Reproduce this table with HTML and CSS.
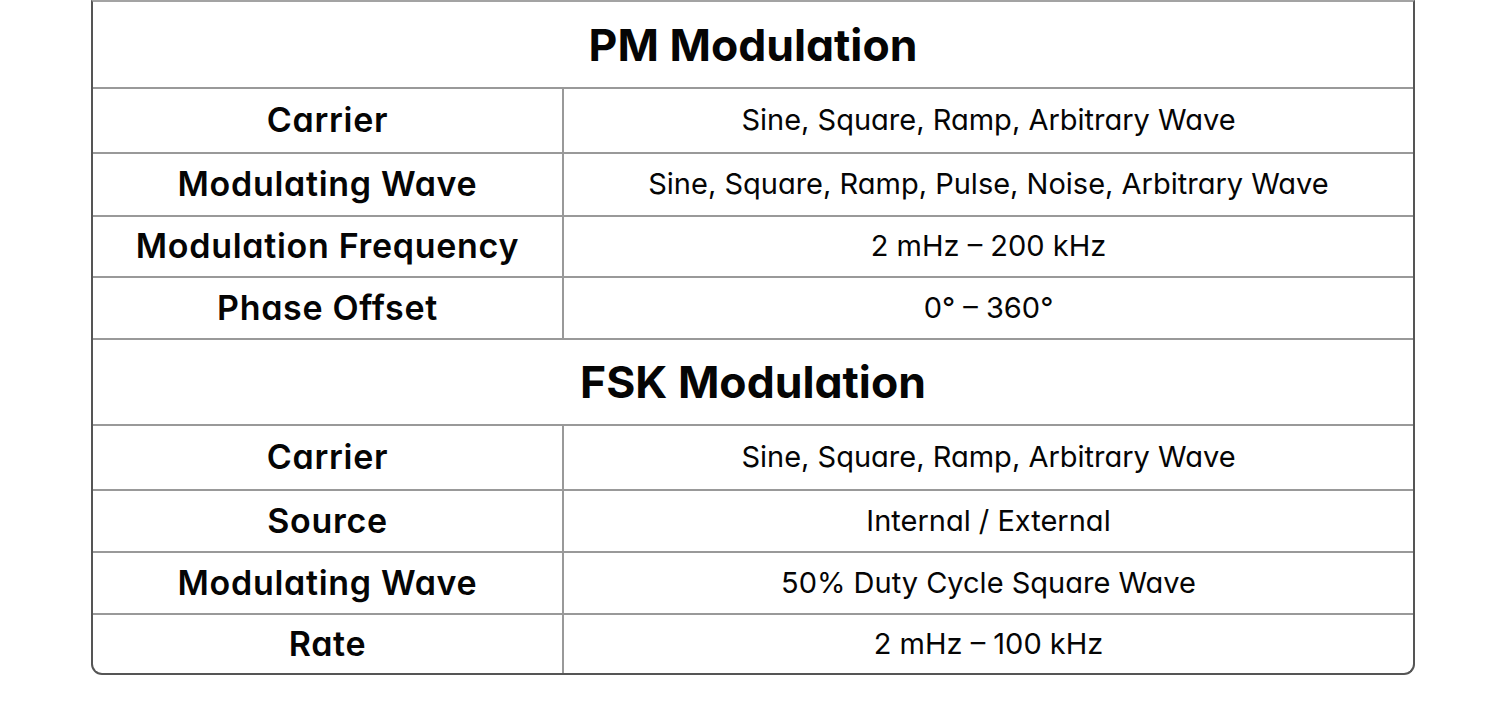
FILE: index.html
```html
<!DOCTYPE html>
<html lang="en">
<head>
<meta charset="utf-8">
<title>Modulation Specifications</title>
<link rel="stylesheet" href="styles.css">
</head>
<body>
<div class="spec">
  <div class="title">PM Modulation</div>
  <div class="row r1"><div class="label">Carrier</div><div class="value">Sine, Square, Ramp, Arbitrary Wave</div></div>
  <div class="row r2"><div class="label">Modulating Wave</div><div class="value">Sine, Square, Ramp, Pulse, Noise, Arbitrary Wave</div></div>
  <div class="row r3"><div class="label">Modulation Frequency</div><div class="value">2 mHz – 200 kHz</div></div>
  <div class="row r4"><div class="label">Phase Offset</div><div class="value">0° – 360°</div></div>
  <div class="title t2">FSK Modulation</div>
  <div class="row r1"><div class="label">Carrier</div><div class="value">Sine, Square, Ramp, Arbitrary Wave</div></div>
  <div class="row r4"><div class="label">Source</div><div class="value">Internal / External</div></div>
  <div class="row r4"><div class="label">Modulating Wave</div><div class="value">50% Duty Cycle Square Wave</div></div>
  <div class="row r5"><div class="label">Rate</div><div class="value">2 mHz – 100 kHz</div></div>
</div>
</body>
</html>
```
FILE: styles.css
```css
html, body {
  margin: 0;
  padding: 0;
  background: #ffffff;
}
body {
  font-family: Inter, "Noto Sans", sans-serif;
  font-feature-settings: "cv11";
  color: #050505;
}
.spec {
  box-sizing: border-box;
  width: 1324px;
  margin-left: 91px;
  border: 2px solid #555555;
  border-top: 2px solid #a3a3a3;
  border-radius: 0 0 11px 11px;
  overflow: hidden;
}
.title {
  height: 85px;
  display: flex;
  align-items: center;
  justify-content: center;
  font-size: 44.5px;
  font-weight: 700;
  letter-spacing: 0;
}
.title.t2 {
  height: 84px;
  border-top: 2px solid #999999;
}
.row {
  display: grid;
  grid-template-columns: 471px 1fr;
  border-top: 2px solid #999999;
}
.r1 { height: 63px; }
.r2 { height: 61px; }
.r3 { height: 59px; }
.r4 { height: 60px; }
.r5 { height: 58px; }
.label {
  display: flex;
  align-items: center;
  justify-content: center;
  border-right: 2px solid #999999;
  font-size: 34px;
  font-weight: 600;
  letter-spacing: 0.7px;
  padding-bottom: 2px;
}
.value {
  display: flex;
  align-items: center;
  justify-content: center;
  font-size: 29px;
  font-weight: 400;
  letter-spacing: 0;
  padding-bottom: 2px;
}
```
